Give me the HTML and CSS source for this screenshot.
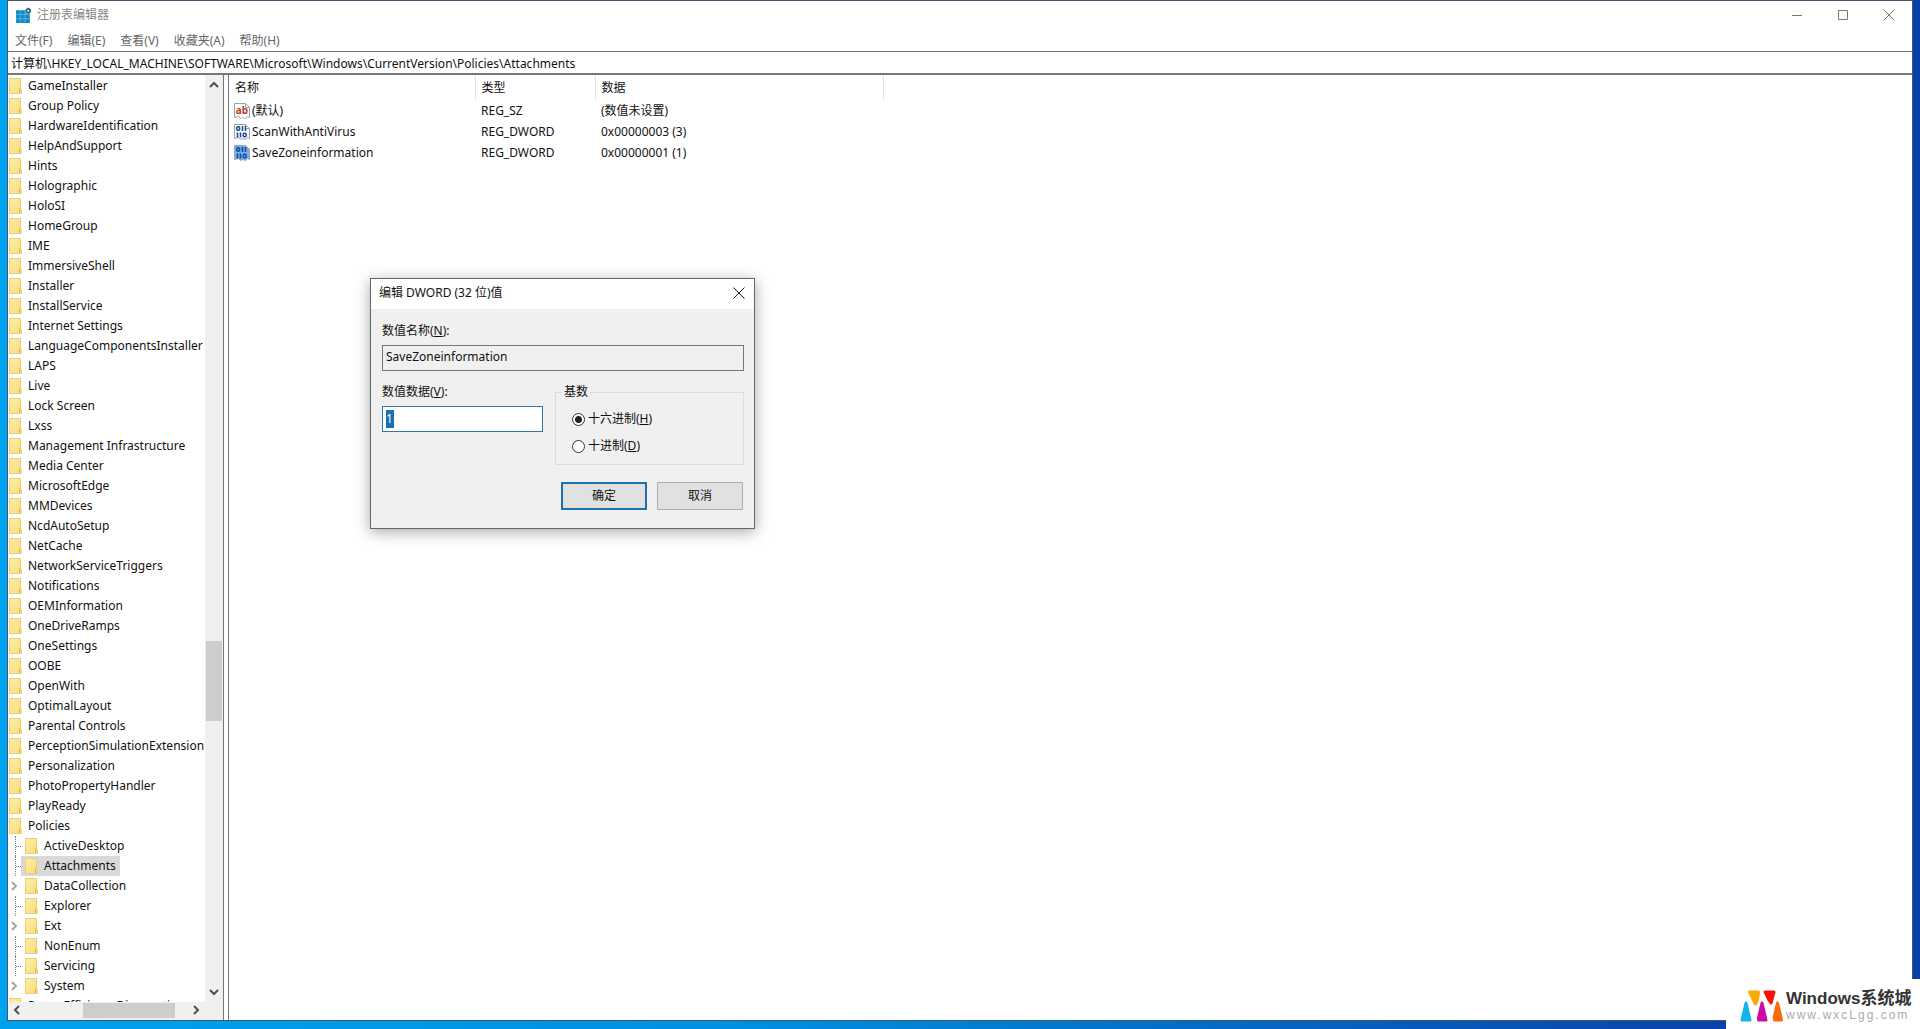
FILE: index.html
```html
<!DOCTYPE html>
<html lang="zh-CN">
<head>
<meta charset="utf-8">
<title>注册表编辑器</title>
<link rel="stylesheet" href="styles.css">
</head>
<body>
<svg class="defs" aria-hidden="true">
  <defs>
    <linearGradient id="gold" x1="0" y1="0" x2="1" y2="1"><stop offset="0" stop-color="#ffeeaa"/><stop offset="1" stop-color="#f8dc78"/></linearGradient>
    <symbol id="folder" viewBox="0 0 13 16"><path d="M.5.5h11v10l1 1v4H.5z" fill="url(#gold)" stroke="#e8cf78"/><path d="M10.500 15v-4l1-1" fill="none" stroke="#dcb84e"/></symbol>
    <symbol id="sheet" viewBox="0 0 16 16"><path d="M.5.500h11l4 4v10l-2-1-2 2-3-1-2 1-2-2-4 1z" fill="currentColor" stroke="#9aa3ad"/><path d="M11.500.5v4h4" fill="none" stroke="#9aa3ad"/></symbol>
    <symbol id="bits" viewBox="0 0 16 16"><g fill="none" stroke="#24489c" stroke-width="1.600"><rect x="2.800" y="2.800" width="2.800" height="3.400" rx="1"/><path d="M8.500 2v5M11.500 2v5M3.500 8.500v5M6.500 8.500v5"/><rect x="9.300" y="9.300" width="2.800" height="3.400" rx="1"/></g></symbol>
    <symbol id="chev" viewBox="0 0 10 10"><path d="M1 7l4-4 4 4" fill="none" stroke="#505050" stroke-width="2"/></symbol>
  </defs>
</svg>
<main class="window">
  <header class="titlebar">
    <svg class="app-icon" viewBox="0 0 16 16"><path d="M1 3h9v3h4v9H1z" fill="#1689c4"/><path d="M1 7h13M1 11h13M5 3v12M9.500 3v12" stroke="#5cc0ea" stroke-width=".7"/><path d="M12.500.5l2.500 1.500v3l-2.500 1.500L10 5V2z" fill="#20678c"/><circle cx="12.500" cy="3.500" r="1" fill="#fff"/></svg>
    <h1 class="title">注册表编辑器</h1>
    <div class="controls">
      <button aria-label="最小化"><svg viewBox="0 0 12 12"><path d="M1 6.500h10"/></svg></button>
      <button aria-label="最大化"><svg viewBox="0 0 12 12"><path d="M1.500 1.500h9v9h-9z"/></svg></button>
      <button aria-label="关闭"><svg viewBox="0 0 12 12"><path d="M.5.5l11 11M11.500.5l-11 11"/></svg></button>
    </div>
  </header>
  <nav class="menu"><button>文件(F)</button><button>编辑(E)</button><button>查看(V)</button><button>收藏夹(A)</button><button>帮助(H)</button></nav>
  <input class="address" aria-label="地址" value="计算机\HKEY_LOCAL_MACHINE\SOFTWARE\Microsoft\Windows\CurrentVersion\Policies\Attachments">
  <div class="panes">
    <section class="tree-pane">
      <ul class="tree" id="tree"></ul>
      <div class="vbar"><svg><use href="#chev"/></svg><div class="vthumb"></div><svg class="down"><use href="#chev"/></svg></div>
      <div class="hbar"><svg class="left"><use href="#chev"/></svg><div class="hthumb"></div><svg class="right"><use href="#chev"/></svg></div>
    </section>
    <section class="values">
      <table>
        <thead><tr><th class="c-name">名称</th><th class="c-type">类型</th><th class="c-data">数据</th></tr></thead>
        <tbody>
          <tr><td><span class="cell"><span class="glyph"><svg><use href="#sheet"/></svg><b>ab</b></span>(默认)</span></td><td>REG_SZ</td><td>(数值未设置)</td></tr>
          <tr><td><span class="cell"><svg class="file"><use href="#sheet"/><use href="#bits"/></svg>ScanWithAntiVirus</span></td><td>REG_DWORD</td><td>0x00000003 (3)</td></tr>
          <tr><td><span class="cell"><svg class="file picked"><use href="#sheet"/><use href="#bits"/></svg>SaveZoneinformation</span></td><td>REG_DWORD</td><td>0x00000001 (1)</td></tr>
        </tbody>
      </table>
    </section>
  </div>
</main>
<form class="dialog" role="dialog" aria-labelledby="dlg-title">
  <header class="dlg-bar"><h2 id="dlg-title">编辑 DWORD (32 位)值</h2><button type="button" aria-label="关闭"><svg viewBox="0 0 12 12"><path d="M.5.5l11 11M11.500.5l-11 11"/></svg></button></header>
  <div class="dlg-body">
    <label for="vname">数值名称(<u>N</u>):</label>
    <input id="vname" class="field" readonly value="SaveZoneinformation">
    <div class="dlg-cols">
      <div class="data-col">
        <label for="vdata">数值数据(<u>V</u>):</label>
        <div class="field active"><input id="vdata" value="1"></div>
      </div>
      <fieldset>
        <legend>基数</legend>
        <label class="radio"><input type="radio" name="base" checked><span>十六进制(<u>H</u>)</span></label>
        <label class="radio"><input type="radio" name="base"><span>十进制(<u>D</u>)</span></label>
      </fieldset>
    </div>
    <div class="actions"><button type="button" class="primary">确定</button><button type="button">取消</button></div>
  </div>
</form>
<aside class="brand">
  <svg viewBox="0 0 44 33"><g stroke-linejoin="round" stroke-width="3"><path d="M9.500 2h9l-1 8-2 4z" fill="#fcaa08" stroke="#fcaa08"/><path d="M25 2h9l-3 11-2-3z" fill="#f91208" stroke="#f91208"/><path d="M6 13l4 17H2z" fill="#12b4ea" stroke="#12b4ea"/><path d="M22 13l4 17h-8z" fill="#cc08a8" stroke="#cc08a8"/><path d="M37.500 13l4 17h-8z" fill="#fb6a08" stroke="#fb6a08"/></g><path d="M7.500 5l9 27M23.500 5l9 27" stroke="#fff" stroke-width="2.500"/></svg>
  <div><strong>Windows系统城</strong><span>www.wxcLgg.com</span></div>
</aside>
<script src="tree.js"></script>
</body>
</html>
```
FILE: tree.js
```js
const before = ["GameInstaller","Group Policy","HardwareIdentification","HelpAndSupport","Hints","Holographic","HoloSI","HomeGroup","IME","ImmersiveShell","Installer","InstallService","Internet Settings","LanguageComponentsInstaller","LAPS","Live","Lock Screen","Lxss","Management Infrastructure","Media Center","MicrosoftEdge","MMDevices","NcdAutoSetup","NetCache","NetworkServiceTriggers","Notifications","OEMInformation","OneDriveRamps","OneSettings","OOBE","OpenWith","OptimalLayout","Parental Controls","PerceptionSimulationExtension","Personalization","PhotoPropertyHandler","PlayReady","Policies"];
const policies = ["ActiveDesktop","Attachments","DataCollection","Explorer","Ext","NonEnum","Servicing","System"];
const expandable = new Set(["DataCollection","Ext","System"]);
const folder = '<svg class="folder"><use href="#folder"/></svg>';
const row = name => `<li>${folder}<span>${name}</span></li>`;
const child = name => `<li class="child">${expandable.has(name)
  ? '<svg class="expand"><use href="#chev"/></svg>'
  : '<i class="guide"></i>'}<span class="node${name === "Attachments" ? " selected" : ""}">${folder}<span>${name}</span></span></li>`;
document.getElementById("tree").innerHTML =
  before.map(row).join("") + policies.map(child).join("") + row("PowerEfficiencyDiagnostics");
```
FILE: styles.css
```css
* { box-sizing: border-box; }
html, body { height: 100%; }
body {
  margin: 0;
  padding: 1px 8px 9px 8px;
  background: linear-gradient(90deg, #00a2f0, #008ee0 40%, #0a3ea8 92%, #0840a8);
  font: 12px/20px "Noto Sans", "Noto Sans CJK SC", sans-serif;
  color: #111;
}
.defs { position: absolute; width: 0; height: 0; }
button, input { font: inherit; color: inherit; }
h1, h2, ul { margin: 0; padding: 0; font: inherit; list-style: none; }
button { border: 0; padding: 0; background: none; }

.window { height: 100%; display: flex; flex-direction: column; background: #fff; outline: 1px solid #44566a; }
.titlebar { display: flex; align-items: center; height: 28px; padding-left: 7px; gap: 5px; color: #888; }
.app-icon { width: 17px; height: 17px; }
.title { flex: 1; }
.controls { display: flex; }
.controls button { width: 46px; height: 28px; display: grid; place-items: center; }
.controls svg, .dlg-bar svg { width: 12px; height: 12px; fill: none; stroke: #777; }
.menu { display: flex; gap: 15px; height: 22px; padding: 2px 7px; color: #666; }
.address { height: 24px; padding: 0 3px; border: 0; border-top: 1px solid #777; border-bottom: 2px solid #777; outline: 0; background: #fff; }

.panes { flex: 1; min-height: 0; display: flex; }
.tree-pane { width: 216px; flex: none; display: grid; grid-template: minmax(0, 1fr) 18px / minmax(0, 1fr) 18px; border-right: 1px solid #777; background: #f0f0f0; }
.tree { overflow: hidden; padding-top: 1px; background: #fff; }
.tree li { display: flex; align-items: center; height: 20px; padding-left: 1px; gap: 6px; white-space: nowrap; }
.folder { width: 13px; height: 16px; flex: none; }
.tree .child { padding-left: 0; gap: 0; }
.node { display: flex; align-items: center; gap: 6px; height: 20px; padding: 0 4px; }
.selected { background: #d9d9d9; }
.guide { width: 6px; height: 20px; margin-left: 7px; border-left: 1px dotted #7b7b9b; background: repeating-linear-gradient(90deg, #7b7b9b 0 1px, transparent 1px 2px) 0 10px / 6px 1px no-repeat; }
.expand { width: 10px; height: 10px; margin: 0 2px 0 1px; transform: rotate(90deg); opacity: .5; }
.vbar, .hbar { display: flex; align-items: center; }
.vbar { flex-direction: column; padding: 5px 0; }
.vbar svg, .hbar svg { width: 10px; height: 10px; }
.down { transform: rotate(180deg); margin-top: auto; }
.vthumb { width: 16px; height: 80px; margin-top: 551px; background: #cdcdcd; }
.hbar { padding: 0 4px 2px; }
.left { transform: rotate(-90deg); }
.right { transform: rotate(90deg); margin-left: auto; }
.hthumb { width: 92px; height: 15px; margin-left: 61px; background: #cdcdcd; }

.values { flex: 1; margin-left: 4px; border-left: 1px solid #777; background: #fff; }
table { border-collapse: collapse; table-layout: fixed; width: 655px; }
th { height: 25px; padding: 1px 6px 0; font-weight: 400; text-align: left; border-right: 1px solid #e2e2e2; }
td { height: 21px; padding: 0 6px; white-space: nowrap; }
td:first-child { padding-left: 5px; }
.c-name { width: 246px; }
.c-type { width: 120px; }
.cell { display: flex; align-items: center; gap: 2px; }
.file, .glyph svg { width: 16px; height: 16px; color: #fff; display: block; }
.file.picked { color: #6eb2f2; }
.glyph { display: grid; }
.glyph > * { grid-area: 1 / 1; }
.glyph b { color: #c0392b; font-size: 10px; line-height: 14px; text-align: center; z-index: 1; }

.dialog { position: absolute; left: 370px; top: 278px; width: 385px; border: 1px solid #666; background: #f0f0f0; box-shadow: 0 3px 14px rgba(0, 0, 0, .35); }
.dlg-bar { display: flex; align-items: center; justify-content: space-between; height: 30px; padding: 0 8px 2px; background: #fff; }
.dlg-bar button { width: 14px; height: 20px; display: grid; place-items: center; }
.dlg-bar svg { stroke: #222; }
.dlg-body { padding: 12px 10px 18px 11px; }
.dlg-body label { display: block; height: 20px; }
.field { display: block; width: 100%; height: 26px; margin-top: 4px; padding: 0 3px 3px; border: 1px solid #777; background: #f0f0f0; outline: 0; }
.active { border-color: #2b78ad; background: #fff; padding: 3px; }
.active input { display: block; width: 8px; height: 18px; padding: 0; border: 0; outline: 0; background: #1a6fb5; color: #fff; }
.dlg-cols { display: flex; justify-content: space-between; margin-top: 11px; }
.data-col { width: 161px; }
fieldset { width: 189px; height: 83px; min-width: 0; margin: 0; padding: 7px 16px 0; border: 1px solid #dcdcdc; }
legend { margin-left: -10px; padding: 0 2px; }
.dlg-body .radio { display: flex; align-items: center; gap: 3px; margin-bottom: 7px; }
input[type="radio"] { appearance: none; width: 13px; height: 13px; margin: 0; border: 1px solid #333; border-radius: 50%; background: #fff; }
input[type="radio"]:checked { background: radial-gradient(circle, #222 0 3px, #fff 4px); }
.actions { display: flex; justify-content: flex-end; gap: 10px; margin-top: 17px; padding-right: 1px; }
.actions button { width: 86px; height: 28px; border: 1px solid #adadad; background: #e1e1e1; }
.actions .primary { border: 2px solid #1a74b0; }

.brand { position: absolute; right: 0; bottom: 0; width: 194px; height: 50px; padding: 11px 6px 0 14px; display: flex; gap: 2px; background: #fff; }
.brand svg { width: 44px; height: 33px; flex: none; }
.brand div { display: flex; flex-direction: column; white-space: nowrap; }
.brand strong { font: 700 17px/18px "Liberation Sans", "Noto Sans CJK SC", sans-serif; color: #333; }
.brand span { font: 12px/14px "Liberation Sans", sans-serif; letter-spacing: 2px; color: #aaa; }
```
